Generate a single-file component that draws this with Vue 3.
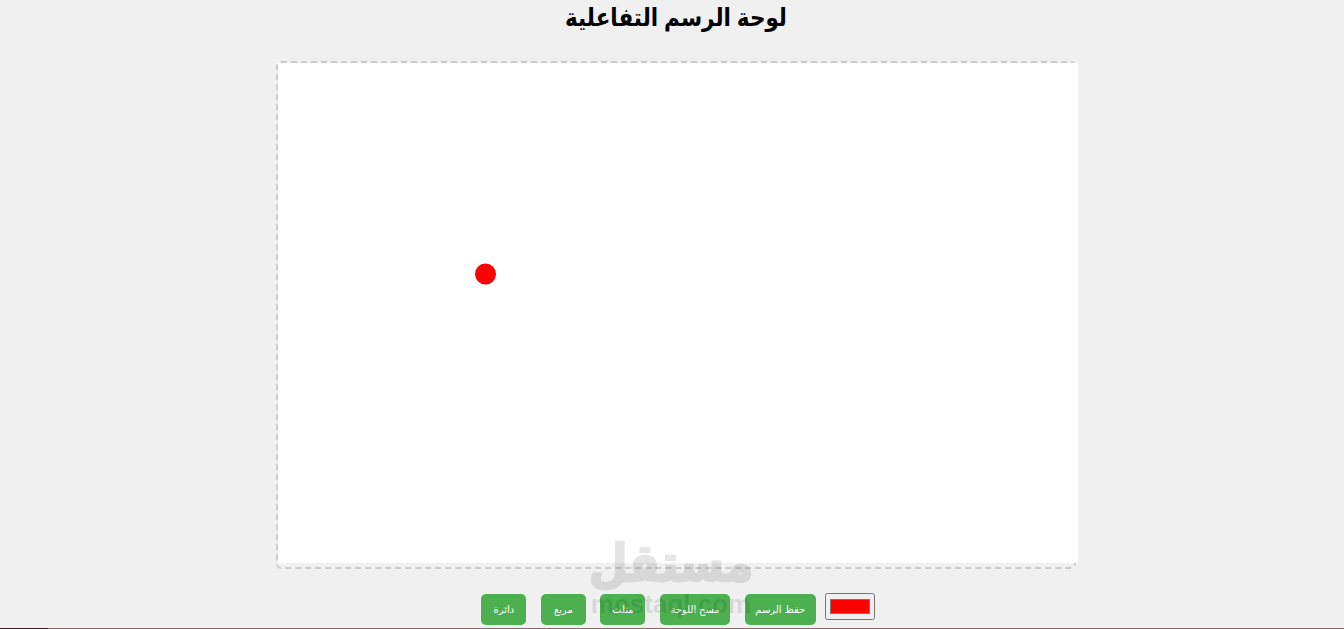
<script setup>
import { onMounted, ref } from 'vue'

const canvasRef = ref(null)
const color = ref('#ff0000')

const buttons = ['حفظ الرسم', 'مسح اللوحة', 'مثلث', 'مربع', 'دائرة']

onMounted(() => {
  const ctx = canvasRef.value.getContext('2d')
  ctx.fillStyle = color.value
  ctx.beginPath()
  ctx.arc(207.5, 211, 10.5, 0, Math.PI * 2)
  ctx.fill()
})
</script>

<template>
  <div class="page" dir="rtl">
    <div class="title-row">
      <h1 class="title">لوحة الرسم التفاعلية</h1>
    </div>
    <div class="board">
      <canvas ref="canvasRef" class="board-canvas" width="800" height="500"></canvas>
    </div>
    <div class="toolbar">
      <input v-model="color" class="color-input" type="color" />
      <button v-for="label in buttons" :key="label" class="tool-btn" type="button">{{ label }}</button>
    </div>
    <div class="strip"><span class="strip-dark"></span></div>
    <div class="watermark" dir="rtl">
      <span class="wm-ar">مستقل</span>
      <span class="wm-en" dir="ltr">mostaql.com</span>
    </div>
  </div>
</template>

<style scoped>
.page {
  position: relative;
  box-sizing: border-box;
  height: 629px;
  padding-left: 8px;
  background: #f0f0f0;
  display: flex;
  flex-direction: column;
  align-items: center;
  font-family: "Liberation Sans", "DejaVu Sans", sans-serif;
  overflow: hidden;
}
.title-row {
  height: 61px;
}
.title {
  margin: 0;
  font-size: 21.5px;
  line-height: 36px;
  font-weight: 700;
  color: #000;
  transform: scaleY(1.15);
}
.board {
  box-sizing: border-box;
  width: 800px;
  border: 2px dashed #ccc;
  border-radius: 5px;
}
.board-canvas {
  background: #fff;
  direction: ltr;
  margin-right: -4px;
  display: inline-block;
}
.toolbar {
  display: flex;
  align-items: flex-start;
  margin-top: 24px;
  margin-left: 4px;
}
.color-input {
  box-sizing: border-box;
  width: 50px;
  height: 27px;
  margin: 0 0 0 9px;
}
.tool-btn {
  box-sizing: border-box;
  min-width: 45px;
  height: 31px;
  margin: 1px 0 0 14.5px;
  padding: 0 10.5px;
  border: none;
  border-radius: 5px;
  background: #4caf50;
  color: #fff;
  font-family: inherit;
  font-size: 10px;
  white-space: nowrap;
}
.tool-btn:last-child {
  margin-left: 0;
}
.strip {
  margin-top: auto;
  align-self: stretch;
  margin-left: -8px;
  height: 1px;
  background: #8a6a6a;
  direction: ltr;
}
.strip-dark {
  display: block;
  width: 48px;
  height: 1px;
  background: #3a1a20;
}
.watermark {
  position: absolute;
  left: 590px;
  top: 536px;
  width: 162px;
  display: flex;
  flex-direction: column;
  align-items: center;
  color: #000;
  opacity: 0.1;
  pointer-events: none;
}
.wm-ar {
  font-size: 45px;
  line-height: 56px;
  font-weight: 700;
  -webkit-text-stroke: 2px #000;
  transform: scaleY(1.15);
}
.wm-en {
  font-size: 26px;
  line-height: 24px;
  font-weight: 700;
}
</style>
